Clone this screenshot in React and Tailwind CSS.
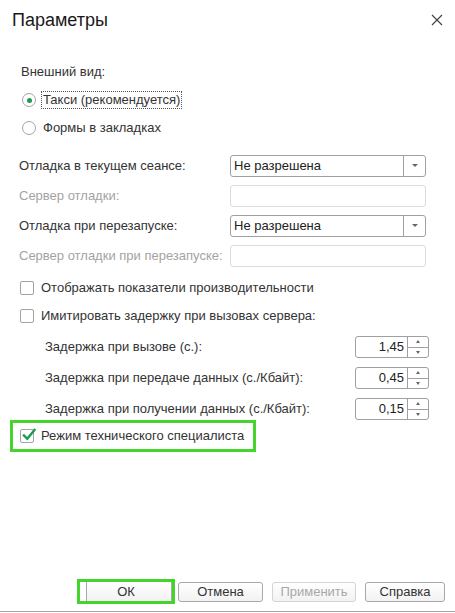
import React from 'react';

const font = { fontFamily: '"Liberation Sans", Arial, sans-serif' };

function Radio({ checked, label, focused }) {
  return (
    <div className="h-[28px] flex items-center pl-[22px]">
      <span className="w-[14px] h-[14px] rounded-full border border-[#a3a3a3] bg-white flex items-center justify-center shrink-0">
        {checked && <span className="w-[5px] h-[5px] rounded-full bg-[#1e9b4d]" />}
      </span>
      <span
        className={
          'ml-[6px] leading-[16px] px-[1px] ' +
          (focused ? 'outline outline-1 outline-dotted outline-[#555]' : '')
        }
      >
        {label}
      </span>
    </div>
  );
}

function Checkbox({ checked, label }) {
  return (
    <div className="flex items-center">
      <span className="w-[14px] h-[14px] rounded-[2px] border border-[#a3a3a3] bg-white flex items-center justify-center shrink-0 relative">
        {checked && (
          <svg width="16" height="16" viewBox="0 0 16 16" className="absolute left-[0px] -top-[3px]">
            <path d="M3 8.5 L6.3 11.8 L13.5 3" fill="none" stroke="#1d9a4c" strokeWidth="2.4" strokeLinecap="square" />
          </svg>
        )}
      </span>
      <span className="ml-[7px]">{label}</span>
    </div>
  );
}

function Select({ value }) {
  return (
    <div className="w-[196px] h-[22px] border border-[#a0a0a0] rounded-[3px] flex items-center bg-white">
      <span className="flex-1 pl-[3px] text-[#222]">{value}</span>
      <span className="w-[22px] h-full border-l border-[#a0a0a0] flex items-center justify-center">
        <svg width="6" height="4" viewBox="0 0 6 4">
          <path d="M0 0 H6 L3 3 Z" fill="#666" />
        </svg>
      </span>
    </div>
  );
}

function Disabled() {
  return <div className="w-[196px] h-[22px] border border-[#dcdcdc] rounded-[3px] bg-white" />;
}

function Spinner({ value }) {
  return (
    <div className="w-[74px] h-[22px] border border-[#a0a0a0] rounded-[3px] flex bg-white">
      <span className="flex-1 text-right pr-[3px] leading-[20px] text-[#222]">{value}</span>
      <span className="w-[21px] border-l border-[#a0a0a0] flex flex-col">
        <span className="flex-1 flex items-center justify-center border-b border-[#a0a0a0]">
          <svg width="4" height="3" viewBox="0 0 4 3"><path d="M0 3 H4 L2 0 Z" fill="#666" /></svg>
        </span>
        <span className="flex-1 flex items-center justify-center">
          <svg width="4" height="3" viewBox="0 0 4 3"><path d="M0 0 H4 L2 3 Z" fill="#666" /></svg>
        </span>
      </span>
    </div>
  );
}

function Button({ children, disabled, className }) {
  return (
    <button
      className={
        'h-[20px] rounded-[3px] border bg-gradient-to-b from-white to-[#f2f2f2] text-[13px] leading-[18px] ' +
        (disabled ? 'border-[#d4d4d4] text-[#a8a8a8] ' : 'border-[#a8a8a8] text-[#333] ') +
        className
      }
    >
      {children}
    </button>
  );
}

export default function App() {
  return (
    <div className="w-[455px] h-[613px] bg-white text-[13px] text-[#333] flex flex-col" style={font}>
      <div className="h-[40px] flex items-center justify-between pl-[12px] pr-[12px]">
        <span className="text-[18px] text-[#1a1a1a]">Параметры</span>
        <svg width="12" height="12" viewBox="0 0 12 12">
          <path d="M1 1 L11 11 M11 1 L1 11" stroke="#444" strokeWidth="1.2" />
        </svg>
      </div>

      <div className="mt-[22px] h-[20px] flex items-center pl-[21px]">Внешний вид:</div>
      <div className="mt-[4px]">
        <Radio checked focused label="Такси (рекомендуется)" />
        <Radio label="Формы в закладках" />
      </div>

      <div className="mt-[13px] flex flex-col gap-[8px] pl-[19px]">
        <div className="h-[22px] flex items-center">
          <span className="w-[211px]">Отладка в текущем сеансе:</span>
          <Select value="Не разрешена" />
        </div>
        <div className="h-[22px] flex items-center">
          <span className="w-[211px] text-[#a3a3a3]">Сервер отладки:</span>
          <Disabled />
        </div>
        <div className="h-[22px] flex items-center">
          <span className="w-[211px]">Отладка при перезапуске:</span>
          <Select value="Не разрешена" />
        </div>
        <div className="h-[22px] flex items-center">
          <span className="w-[211px] text-[#a3a3a3]">Сервер отладки при перезапуске:</span>
          <Disabled />
        </div>
      </div>

      <div className="mt-[7px] pl-[20px]">
        <div className="h-[28px] flex items-center">
          <Checkbox label="Отображать показатели производительности" />
        </div>
        <div className="h-[28px] flex items-center">
          <Checkbox label="Имитировать задержку при вызовах сервера:" />
        </div>
      </div>

      <div className="mt-[6px] flex flex-col gap-[9px] pl-[45px]">
        <div className="h-[22px] flex items-center">
          <span className="w-[310px]">Задержка при вызове (с.):</span>
          <Spinner value="1,45" />
        </div>
        <div className="h-[22px] flex items-center">
          <span className="w-[310px]">Задержка при передаче данных (с./Кбайт):</span>
          <Spinner value="0,45" />
        </div>
        <div className="h-[22px] flex items-center">
          <span className="w-[310px]">Задержка при получении данных (с./Кбайт):</span>
          <Spinner value="0,15" />
        </div>
      </div>

      <div className="ml-[10px] w-[246px] h-[32px] border-[3px] border-[#45d42c] flex items-center pl-[7px]">
        <Checkbox checked label="Режим технического специалиста" />
      </div>

      <div className="flex-1" />

      <div className="h-[25px] flex items-center pl-[77px]">
        <div className="w-[98px] h-[25px] border-[3px] border-[#45d42c] flex">
          <button className="flex-1 ml-[6px] border-x border-[#a8a8a8] bg-gradient-to-b from-white to-[#f2f2f2] text-[13px] text-[#333] leading-[19px] pr-[6px]">
            ОК
          </button>
        </div>
        <Button className="ml-[3px] w-[85px]">Отмена</Button>
        <Button disabled className="ml-[9px] w-[84px]">Применить</Button>
        <Button className="ml-[9px] w-[80px]">Справка</Button>
      </div>
      <div className="h-[7px]" />
      <div className="h-[1px] bg-[#a6a6a6]" />
      <div className="h-[1px]" />
    </div>
  );
}
